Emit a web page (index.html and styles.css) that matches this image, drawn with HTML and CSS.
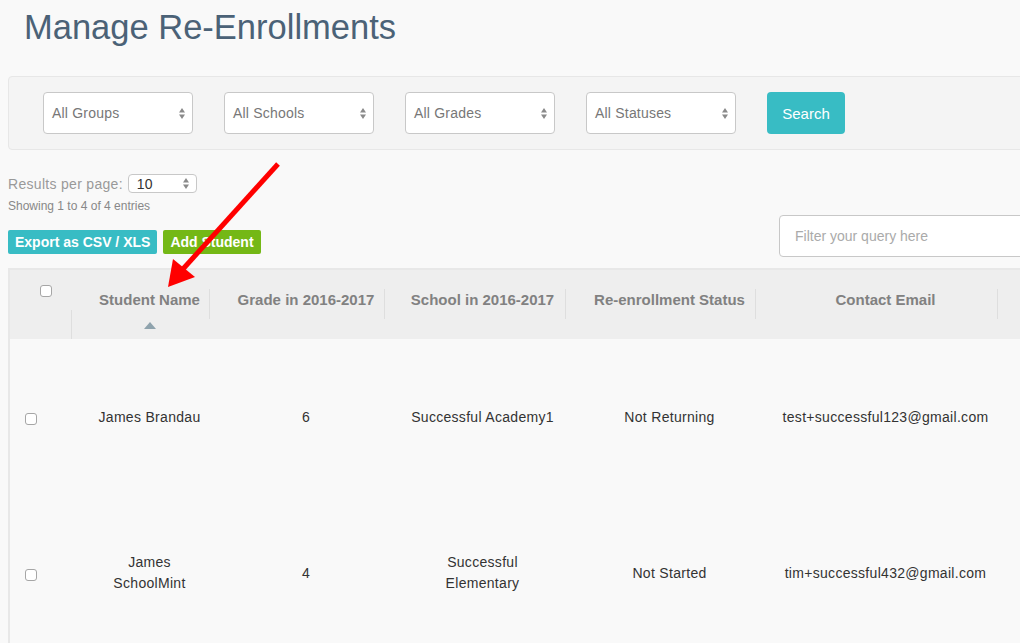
FILE: index.html
```html
<!DOCTYPE html>
<html>
<head>
  <link rel="stylesheet" href="styles.css">
</head>
<body>
  <div class="page">
    <h1 class="page-title">Manage Re-Enrollments</h1>

    <div class="filter-bar">
      <div class="select-box"><span>All Groups</span><svg class="updown" width="6" height="11" viewBox="0 0 6 11"><path d="M0 4.5 L3 0 L6 4.5 Z M0 6.5 L3 11 L6 6.5 Z"/></svg></div>
      <div class="select-box"><span>All Schools</span><svg class="updown" width="6" height="11" viewBox="0 0 6 11"><path d="M0 4.5 L3 0 L6 4.5 Z M0 6.5 L3 11 L6 6.5 Z"/></svg></div>
      <div class="select-box"><span>All Grades</span><svg class="updown" width="6" height="11" viewBox="0 0 6 11"><path d="M0 4.5 L3 0 L6 4.5 Z M0 6.5 L3 11 L6 6.5 Z"/></svg></div>
      <div class="select-box"><span>All Statuses</span><svg class="updown" width="6" height="11" viewBox="0 0 6 11"><path d="M0 4.5 L3 0 L6 4.5 Z M0 6.5 L3 11 L6 6.5 Z"/></svg></div>
      <button class="btn-search">Search</button>
    </div>

    <div class="toolbar">
      <div class="toolbar-left">
        <div class="per-page">
          <span class="per-page-label">Results per page:</span>
          <div class="select-small"><span>10</span><svg class="updown" width="6" height="11" viewBox="0 0 6 11"><path d="M0 4.5 L3 0 L6 4.5 Z M0 6.5 L3 11 L6 6.5 Z"/></svg></div>
        </div>
        <div class="entries-info">Showing 1 to 4 of 4 entries</div>
        <div class="actions">
          <button class="btn btn-teal">Export as CSV / XLS</button>
          <button class="btn btn-green">Add Student</button>
        </div>
      </div>
      <div class="toolbar-right">
        <input class="filter-input" type="text" placeholder="Filter your query here">
      </div>
    </div>

    <table class="students">
      <colgroup>
        <col style="width: 62px">
        <col style="width: 138px">
        <col style="width: 175px">
        <col style="width: 181px">
        <col style="width: 190px">
        <col style="width: 242px">
        <col style="width: 100px">
      </colgroup>
      <thead>
        <tr>
          <th><input class="check" type="checkbox"></th>
          <th>Student Name<div class="sort-asc"></div></th>
          <th>Grade in 2016-2017</th>
          <th>School in 2016-2017</th>
          <th>Re-enrollment Status</th>
          <th>Contact Email</th>
          <th></th>
        </tr>
      </thead>
      <tbody>
        <tr>
          <td><input class="check" type="checkbox"></td>
          <td>James Brandau</td>
          <td>6</td>
          <td>Successful Academy1</td>
          <td>Not Returning</td>
          <td>test+successful123@gmail.com</td>
          <td></td>
        </tr>
        <tr>
          <td><input class="check" type="checkbox"></td>
          <td>James SchoolMint</td>
          <td>4</td>
          <td>Successful Elementary</td>
          <td>Not Started</td>
          <td>tim+successful432@gmail.com</td>
          <td></td>
        </tr>
      </tbody>
    </table>
  </div>

  <!-- annotation arrow -->
  <svg class="annotation" width="1020" height="643" viewBox="0 0 1020 643">
    <line x1="278" y1="164" x2="183" y2="269" stroke="#f00" stroke-width="5"/>
    <polygon points="168,287 173,259 195,277" fill="#f00"/>
  </svg>
</body>
</html>
```

FILE: styles.css
```css
* {
  box-sizing: border-box;
}

body {
  margin: 0;
  padding: 8px;
  font-family: 'Liberation Sans', Arial, sans-serif;
  background: #f9f9f9;
  color: #333;
  overflow: hidden;
  position: relative;
  height: 643px;
}

.page {
  width: 1071px;
}

.page-title {
  margin: 0 0 0 16px;
  font-size: 34.5px;
  line-height: 38px;
  font-weight: 400;
  color: #4b6277;
}

/* Filter panel */
.filter-bar {
  display: flex;
  gap: 31px;
  margin-top: 30px;
  padding: 15px 34px;
  background: #f4f4f4;
  border: 1px solid #e7e7e7;
  border-radius: 4px;
}

.select-box {
  width: 150px;
  height: 42px;
  display: flex;
  align-items: center;
  justify-content: space-between;
  padding: 0 7px 0 8px;
  background: #fff;
  border: 1px solid #c8c8c8;
  border-radius: 4px;
  font-size: 14px;
  letter-spacing: 0.2px;
  color: #777;
}

.updown {
  fill: #8a8a8a;
}

.btn-search {
  width: 78px;
  height: 42px;
  border: none;
  border-radius: 4px;
  background: #38bcc4;
  color: #fff;
  font-family: inherit;
  font-size: 15px;
  padding: 0;
}

/* Toolbar */
.toolbar {
  display: flex;
  justify-content: space-between;
  margin-top: 24px;
}

.per-page {
  display: flex;
  align-items: center;
  gap: 5px;
  height: 19px;
  font-size: 14px;
  color: #999;
}

.per-page-label {
  letter-spacing: 0.3px;
}

.select-small {
  width: 69px;
  height: 19px;
  display: flex;
  align-items: center;
  justify-content: space-between;
  padding: 0 7px 0 8px;
  background: #fff;
  border: 1px solid #c8c8c8;
  border-radius: 4px;
  color: #333;
}

.entries-info {
  margin-top: 6px;
  font-size: 12px;
  line-height: 14px;
  color: #888;
}

.actions {
  display: flex;
  gap: 6px;
  margin-top: 17px;
}

.btn {
  height: 24px;
  padding: 0 7px;
  border: none;
  border-radius: 2px;
  color: #fff;
  font-family: inherit;
  font-size: 14px;
  font-weight: 700;
}

.btn-teal {
  background: #38bcc4;
}

.btn-green {
  background: #74b816;
}

.toolbar-right {
  padding-top: 41px;
}

.filter-input {
  width: 300px;
  height: 42px;
  padding: 0 15px;
  border: 1px solid #c8c8c8;
  border-radius: 4px;
  background: #fff;
  font-family: inherit;
  font-size: 14px;
  color: #333;
}

.filter-input::placeholder {
  color: #aaa;
}

/* Table */
.students {
  margin-top: 11px;
  table-layout: fixed;
  width: 1090px;
  border-collapse: separate;
  border-spacing: 0;
  border-top: 2px solid #e8e8e8;
  border-left: 2px solid #e8e8e8;
}

.students thead tr {
  height: 69px;
}

.students th {
  position: relative;
  background: #eeeeee;
  padding: 20px 8px 0 25px;
  vertical-align: top;
  text-align: center;
  font-size: 15px;
  line-height: 20px;
  font-weight: 700;
  color: #818181;
}

.students th::after {
  content: '';
  position: absolute;
  right: 0;
  top: 19px;
  width: 1px;
  height: 30px;
  background: #dedede;
}

.students th:first-child {
  padding: 15px 0 0 30px;
  text-align: left;
}

.students th:first-child::after {
  top: 40px;
  height: 29px;
}

.students th:last-child::after {
  display: none;
}

.sort-asc {
  width: 0;
  height: 0;
  margin: 12px auto 0;
  border-left: 6px solid transparent;
  border-right: 6px solid transparent;
  border-bottom: 7px solid #8fa3ad;
}

.students tbody tr {
  height: 156px;
}

.students td {
  padding: 8px 8px 8px 25px;
  vertical-align: middle;
  text-align: center;
  font-size: 14px;
  line-height: 21px;
  letter-spacing: 0.3px;
  color: #333;
}

.students td:first-child {
  padding-left: 15px;
  text-align: left;
}

.students th:nth-child(4),
.students td:nth-child(4) {
  padding-right: 11px;
}

.students th:nth-child(6),
.students td:nth-child(6) {
  padding-left: 17px;
  padding-right: 0;
  white-space: nowrap;
}

.check {
  appearance: none;
  display: block;
  width: 12px;
  height: 12px;
  margin: 0;
  background: #fff;
  border: 1px solid #a6a6a6;
  border-radius: 3px;
}

.students td .check {
  margin-top: 4px;
}

.annotation {
  position: absolute;
  top: 0;
  left: 0;
  pointer-events: none;
}
```
